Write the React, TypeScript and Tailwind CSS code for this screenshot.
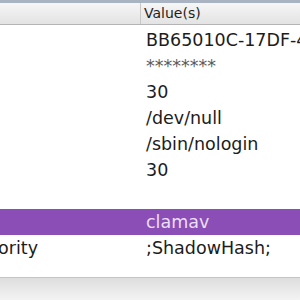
export default function App() {
  const rows: { key: string; value: string; selected?: boolean; faint?: boolean }[] = [
    { key: '', value: 'BB65010C-17DF-4C2D-9F5A-0E8B1D7A3C21' },
    { key: '', value: '********', faint: true },
    { key: '', value: '30' },
    { key: '', value: '/dev/null' },
    { key: '', value: '/sbin/nologin' },
    { key: '', value: '30' },
    { key: '', value: '' },
    { key: '', value: 'clamav', selected: true },
    { key: 'AuthenticationAuthority', value: ';ShadowHash;' },
  ];

  return (
    <div className="w-[300px] h-[300px] overflow-hidden bg-white flex flex-col font-['DejaVu_Sans',sans-serif]">
      <div className="h-[3px] bg-[#a9b3c1] flex-shrink-0" />

      {/* header */}
      <div className="h-[22px] flex flex-shrink-0 bg-gradient-to-b from-[#f6f6f6] to-[#e3e3e3] border-b border-[#b4b4b4]">
        <div className="w-[141px] border-r border-[#c8c8c8] flex-shrink-0" />
        <div className="flex-1 flex items-center pl-[3px] text-[14px] text-[#1e1e1e] whitespace-nowrap">Value(s)</div>
      </div>

      {/* rows */}
      <div className="flex flex-col h-[253px] flex-shrink-0 border-b border-[#c4c4c4]">
        {rows.map((r, i) => (
          <div
            key={i}
            className={`h-[26px] flex items-center text-[17.5px] whitespace-nowrap overflow-hidden ${
              r.selected ? 'bg-[#8b4db6] text-[#ecdff5]' : r.faint ? 'text-[#5a5a5a]' : 'text-[#1c1c1c]'
            } ${i === 0 ? 'mt-[2px]' : ''}`}
          >
            <div className="w-[141px] flex-shrink-0 overflow-hidden flex justify-end pr-[103px]">
              <span>{r.key}</span>
            </div>
            <div className="pl-[5px]">{r.value}</div>
          </div>
        ))}
      </div>

      <div className="flex-1 bg-gradient-to-b from-[#dedede] to-[#f3f3f3]" />
    </div>
  );
}
